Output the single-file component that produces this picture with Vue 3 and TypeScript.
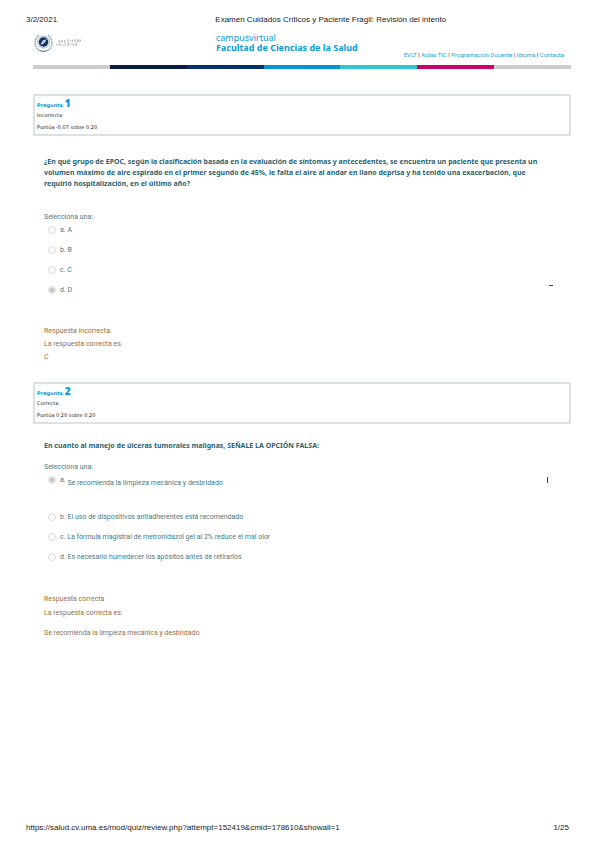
<script setup lang="ts">
interface Option {
  letter: string
  text: string
  chosen?: boolean
  mark?: 'dash' | 'bar'
}
interface Question {
  number: number
  state: string
  grade: string
  statement: string
  options: Option[]
  result: string
  answer: string
  spaced: boolean
}

const links: string[] = ['EVLT', 'Aulas TIC', 'Programación Docente', 'Idioma', 'Contacta']
const stripes: string[] = ['grey', 'night', 'navy', 'blue', 'aqua', 'pink', 'grey']

const questions: Question[] = [
  {
    number: 1,
    state: 'Incorrecta',
    grade: 'Puntúa -0,07 sobre 0,20',
    statement:
      '¿En qué grupo de EPOC, según la clasificación basada en la evaluación de síntomas y antecedentes, se encuentra un paciente que presenta un volumen máximo de aire espirado en el primer segundo de 45%, le falta el aire al andar en llano deprisa y ha tenido una exacerbación, que requirió hospitalización, en el último año?',
    options: [
      { letter: 'a.', text: 'A' },
      { letter: 'b.', text: 'B' },
      { letter: 'c.', text: 'C' },
      { letter: 'd.', text: 'D', chosen: true, mark: 'dash' },
    ],
    result: 'Respuesta incorrecta.',
    answer: 'C',
    spaced: false,
  },
  {
    number: 2,
    state: 'Correcta',
    grade: 'Puntúa 0,20 sobre 0,20',
    statement: 'En cuanto al manejo de úlceras tumorales malignas, SEÑALE LA OPCIÓN FALSA:',
    options: [
      { letter: 'a.', text: 'Se recomienda la limpieza mecánica y desbridado', chosen: true, mark: 'bar' },
      { letter: 'b.', text: 'El uso de dispositivos antiadherentes está recomendado' },
      { letter: 'c.', text: 'La fórmula magistral de metronidazol gel al 2% reduce el mal olor' },
      { letter: 'd.', text: 'Es necesario humedecer los apósitos antes de retirarlos' },
    ],
    result: 'Respuesta correcta',
    answer: 'Se recomienda la limpieza mecánica y desbridado',
    spaced: true,
  },
]
</script>

<template>
  <div class="page">
    <div class="print-line print-head">
      <span>3/2/2021</span>
      <span>Examen Cuidados Críticos y Paciente Frágil: Revisión del intento</span>
    </div>

    <header class="site">
      <svg class="logo" viewBox="0 0 50 20" role="img" aria-label="Universidad">
        <g fill="none" stroke="#8fa9b8" stroke-width="1.6" stroke-dasharray="1.6 0.7">
          <path d="M6 2.2C0.6 6 0.6 14.500 7 17.800" />
          <path d="M15 2.200C20.400 6 20.400 14.500 14 17.800" />
        </g>
        <path d="M6.500 17.200q4 2.400 8 0" fill="none" stroke="#6e8b9d" stroke-width="1.200" />
        <circle cx="10.500" cy="9" r="6" fill="#dce5eb" stroke="#8499aa" stroke-width="0.600" />
        <circle cx="10.500" cy="9" r="4.700" fill="#12305a" />
        <path d="M7.500 11.200l2.300-3.900 3.800-1-1.700 3.300-2.600 1.900z" fill="#b9d3e4" />
        <g fill="none" stroke="#a9adb1" stroke-width="0.900">
          <path d="M25 8.300l1.500-1v2.200m1.500 0l1-2.600 1 2.500m1.500-2.500v2.500h1.500m1-2.500h2m-2 1.200h2m1-1.200l1.500 2.400m1-2.400v2.400m1.500-2.400h2m-1 0v2.400m2.500-2.400v2.400m0-2.400h3v1.200h-3" stroke-dasharray="2 0.500" />
          <path d="M23 11.800h2m1-1.500l1 2.300 1-2.300m1.500 2.300h2m1-2.300v2.300m1.500-2.300h2v2.300h-2m3.500-2.300l1 2.300m1.500-2.300v2.300m1.500-2.300h2v2.300h-2" stroke-dasharray="2 0.500" />
        </g>
      </svg>
      <div class="brand">
        <span>campusvirtual</span>
        <strong>Facultad de Ciencias de la Salud</strong>
      </div>
      <nav class="links" aria-label="Principal">
        <template v-for="(link, i) in links" :key="link">
          <span v-if="i > 0"> | </span><a href="#">{{ link }}</a>
        </template>
      </nav>
    </header>
    <div class="stripes"><i v-for="(s, i) in stripes" :key="i" :class="s"></i></div>

    <main>
      <section v-for="q in questions" :key="q.number" class="question" :class="{ spaced: q.spaced }">
        <div class="info">
          <h3>Pregunta <b>{{ q.number }}</b></h3>
          <div>{{ q.state }}</div>
          <div>{{ q.grade }}</div>
        </div>
        <div class="content">
          <p class="statement">{{ q.statement }}</p>
          <fieldset>
            <legend>Selecciona una:</legend>
            <div v-for="o in q.options" :key="o.letter" class="option" :class="{ chosen: o.chosen }">
              <input :id="`q${q.number}${o.letter}`" type="radio" :name="`q${q.number}`" :checked="o.chosen" disabled />
              <label :for="`q${q.number}${o.letter}`"><span class="letter">{{ o.letter }}</span> <span class="text">{{ o.text }}</span></label>
              <i v-if="o.mark" class="mark" :class="o.mark"></i>
            </div>
          </fieldset>
          <div class="feedback">
            <div>{{ q.result }}</div>
            <div>La respuesta correcta es:</div>
            <div class="answer">{{ q.answer }}</div>
          </div>
        </div>
      </section>
    </main>

    <footer class="print-line print-foot">
      <span>https://salud.cv.uma.es/mod/quiz/review.php?attempt=152419&amp;cmid=178610&amp;showall=1</span>
      <span>1/25</span>
    </footer>
  </div>
</template>

<style>
body {
  margin: 0;
  background: #fff;
}
</style>

<style scoped>
.page {
  box-sizing: border-box;
  min-height: 100vh;
  display: flex;
  flex-direction: column;
  padding: 14px 28px 14px 33px;
  font-family: Roboto, 'Noto Sans', sans-serif;
  font-size: 7px;
  line-height: 12px;
  color: #477b87;
}
.print-line {
  display: flex;
  justify-content: space-between;
  margin-left: -7px;
  font-family: 'Liberation Sans', sans-serif;
  font-size: 8px;
  color: #222;
}
.print-head {
  display: grid;
  grid-template-columns: 34% 1fr;
  column-gap: 4px;
}
.print-foot {
  margin-top: auto;
  padding-right: 2px;
}
.site {
  display: grid;
  grid-template-columns: 34% auto 1fr;
  margin-top: 7px;
  height: 32px;
}
.logo {
  width: 50px;
  height: 20px;
}
.brand {
  display: flex;
  flex-direction: column;
  font-family: 'Noto Sans', sans-serif;
  font-size: 9px;
  line-height: 10px;
  color: #0a9bd3;
}
.links {
  align-self: end;
  justify-self: end;
  margin-bottom: 4px;
  padding-right: 7px;
  font-size: 6px;
  white-space: nowrap;
  color: #222;
}
a {
  color: #149fd2;
  text-decoration: none;
}
.stripes {
  display: flex;
  height: 4px;
}
.stripes i {
  flex: 1;
}
.grey { background: #ccc; }
.night { background: #0b1a40; }
.navy { background: #002f6b; }
.blue { background: #0096d1; }
.aqua { background: #30c8cd; }
.pink { background: #cc0066; }
main {
  padding-top: 25px;
}
.question + .question {
  margin-top: 19px;
}
.info {
  border: 2px solid #dce1e5;
  padding: 1px 2px;
  font-family: 'DejaVu Sans', sans-serif;
  font-size: 5px;
  color: #222;
}
h3 {
  margin: 0;
  font-size: 5px;
  line-height: 12px;
  height: 12px;
  color: #0a9bd3;
}
h3 b {
  font-family: 'Noto Sans', sans-serif;
  font-size: 10px;
}
.content {
  padding: 20px 12px 0 11px;
}
.statement {
  margin: 0 0 22px;
  padding-right: 12px;
  font-family: 'Noto Sans', sans-serif;
  font-weight: 700;
  line-height: 11px;
  color: #2c6371;
}
fieldset {
  margin: 0;
  padding: 0;
  border: 0;
  min-width: 0;
}
legend {
  padding: 0;
}
.option {
  display: flex;
  align-items: center;
  gap: 4px;
  height: 14px;
  margin-bottom: 6px;
  padding-left: 4px;
}
.option:last-child {
  margin-bottom: 0;
}
input {
  appearance: none;
  box-sizing: border-box;
  width: 8px;
  height: 8px;
  margin: 0;
  border: 1px solid #ddd;
  border-radius: 50%;
  background: #fafafa;
}
.chosen input {
  background: radial-gradient(circle, #bbb 0 1px, #eee 3px);
}
.mark {
  margin-left: auto;
}
.dash {
  width: 4px;
  height: 1px;
  margin-right: 6px;
  margin-bottom: 9px;
  background: #7c2f2f;
}
.bar {
  width: 1px;
  height: 6px;
  margin-right: 11px;
  background: #444;
}
.feedback {
  margin-top: 28px;
  display: grid;
  row-gap: 1px;
  color: #957048;
}
.spaced .content {
  padding-top: 16px;
}
.spaced .statement {
  margin-bottom: 10px;
}
.spaced .chosen {
  margin-bottom: 23px;
}
.spaced .chosen .text {
  position: relative;
  top: 3px;
}
.spaced .feedback {
  margin-top: 29px;
  row-gap: 2px;
}
.spaced .answer {
  margin-top: 6px;
}
</style>
